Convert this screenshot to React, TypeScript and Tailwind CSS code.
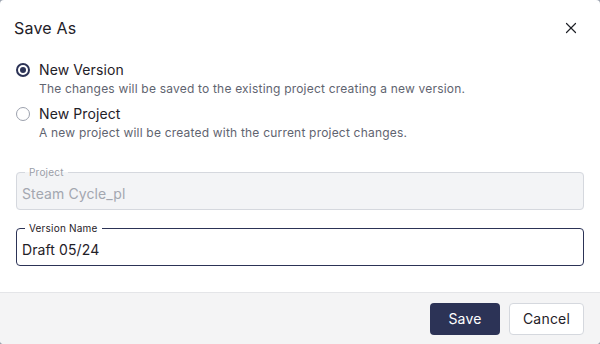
import { X } from "lucide-react";

export default function App() {
  return (
    <div className="w-[600px] h-[344px] bg-[#9ca3af]" style={{ fontFamily: "Inter, 'Noto Sans', sans-serif" }}>
      <div className="w-full h-full bg-white rounded-[4px] overflow-hidden flex flex-col">
        {/* Header */}
        <div className="flex items-center justify-between pl-[14px] pr-[20px] h-[56px]">
          <h2 className="text-[16px] text-[#1f2128] tracking-[0.2px]">Save As</h2>
          <X size={18} strokeWidth={1.6} className="text-[#1f2128]" />
        </div>

        {/* Body */}
        <div className="flex-1 px-[16px] pt-[5px]">
          <div className="flex flex-col gap-[7px]">
            <label className="flex items-start gap-[9px]">
              <span className="mt-[2px] w-[14px] h-[14px] rounded-full border-2 border-[#2c3356] flex items-center justify-center shrink-0">
                <span className="w-[6px] h-[6px] rounded-full bg-[#2c3356]" />
              </span>
              <span className="flex flex-col">
                <span className="text-[14px] leading-[18px] text-[#1f2128] tracking-[0.1px]">New Version</span>
                <span className="text-[12px] leading-[19px] text-[#5f6470] tracking-[0.2px]">
                  The changes will be saved to the existing project creating a new version.
                </span>
              </span>
            </label>
            <label className="flex items-start gap-[9px]">
              <span className="mt-[2px] w-[14px] h-[14px] rounded-full border-[1.5px] border-[#9ca1ad] shrink-0" />
              <span className="flex flex-col">
                <span className="text-[14px] leading-[18px] text-[#1f2128] tracking-[0.1px]">New Project</span>
                <span className="text-[12px] leading-[19px] text-[#5f6470] tracking-[0.2px]">
                  A new project will be created with the current project changes.
                </span>
              </span>
            </label>
          </div>

          {/* Project field (disabled) */}
          <fieldset className="mt-[25px] h-[43px] border border-[#d5d8de] rounded-[4px] bg-[#f3f4f6] px-[5px]">
            <legend className="ml-[3px] px-[4px] text-[10px] leading-[10px] text-[#9a9ea8] tracking-[0.2px]">Project</legend>
            <div className="pt-[6px] text-[14px] text-[#a3a7b0] tracking-[0.1px]">Steam Cycle_pl</div>
          </fieldset>

          {/* Version name field */}
          <fieldset className="mt-[13px] h-[43px] border border-[#2c3356] rounded-[4px] bg-white px-[5px]">
            <legend className="ml-[3px] px-[4px] text-[10px] leading-[10px] text-[#1f2128] tracking-[0.2px]">Version Name</legend>
            <div className="pt-[6px] text-[14px] text-[#1f2128] tracking-[0.1px]">Draft 05/24</div>
          </fieldset>
        </div>

        {/* Footer */}
        <div className="h-[52px] bg-[#f4f4f5] border-t border-[#e4e5e8] flex items-center justify-end gap-[9px] pr-[16px]">
          <button className="w-[70px] h-[32px] rounded-[4px] bg-[#2c3356] text-white text-[14px] tracking-[0.2px]">Save</button>
          <button className="w-[75px] h-[32px] rounded-[4px] bg-white border border-[#d5d8de] text-[#1f2128] text-[14px] tracking-[0.2px]">
            Cancel
          </button>
        </div>
      </div>
    </div>
  );
}
